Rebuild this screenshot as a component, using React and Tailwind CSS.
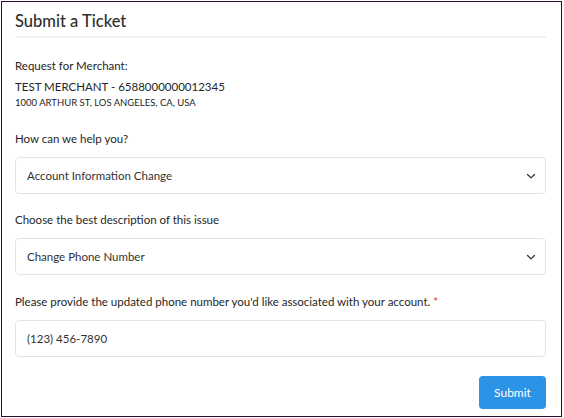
import React from 'react';

const Chevron = () => (
  <svg width="10" height="10" viewBox="0 0 16 16" fill="none" stroke="#343a40" strokeWidth="2.2" strokeLinecap="round" strokeLinejoin="round">
    <path d="M2.5 5.5l5.5 5.5 5.5-5.5" />
  </svg>
);

const SelectBox = ({ value }) => (
  <div className="h-[37px] pl-[11px] pr-[9px] flex items-center justify-between border border-[#e3e3e3] rounded-[4px] bg-white text-[11.5px] text-[#333]">
    <span>{value}</span>
    <Chevron />
  </div>
);

export default function App() {
  return (
    <div className="w-[564px] h-[418px] bg-white pl-px pt-px" style={{ fontFamily: 'Lato, "Noto Sans", sans-serif' }}>
      <div className="w-[561px] h-[416px] border border-[#2b0d2d] pl-[13px] pr-[15px] text-[#262626]">
        <h1 className="pt-[9px] pb-[5px] text-[16.5px] leading-[20px] font-medium text-[#2e2e2e] border-b-2 border-[#f0f0f0]">Submit a Ticket</h1>

        <p className="mt-[20px] text-[11.5px] leading-[16px]">Request for Merchant:</p>
        <p className="mt-[5px] text-[11.5px] leading-[16px]">TEST MERCHANT - 6588000000012345</p>
        <p className="mt-px text-[9.5px] leading-[14px]">1000 ARTHUR ST, LOS ANGELES, CA, USA</p>

        <p className="mt-[21px] mb-[10px] text-[11.5px] leading-[16px]">How can we help you?</p>
        <SelectBox value="Account Information Change" />

        <p className="mt-[18px] mb-[10px] text-[11.5px] leading-[16px]">Choose the best description of this issue</p>
        <SelectBox value="Change Phone Number" />

        <p className="mt-[19px] mb-[10px] text-[11.5px] leading-[16px]">
          Please provide the updated phone number you'd like associated with your account. <span className="text-[#e53935]">*</span>
        </p>
        <div className="h-[37px] px-[11px] flex items-center border border-[#e3e3e3] rounded-[4px] text-[11.5px] text-[#333]">(123) 456-7890</div>

        <div className="mt-[19px] flex justify-end">
          <button className="w-[67px] h-[33px] rounded-[4px] bg-[#2b94e6] text-white text-[12px]">Submit</button>
        </div>
      </div>
    </div>
  );
}
